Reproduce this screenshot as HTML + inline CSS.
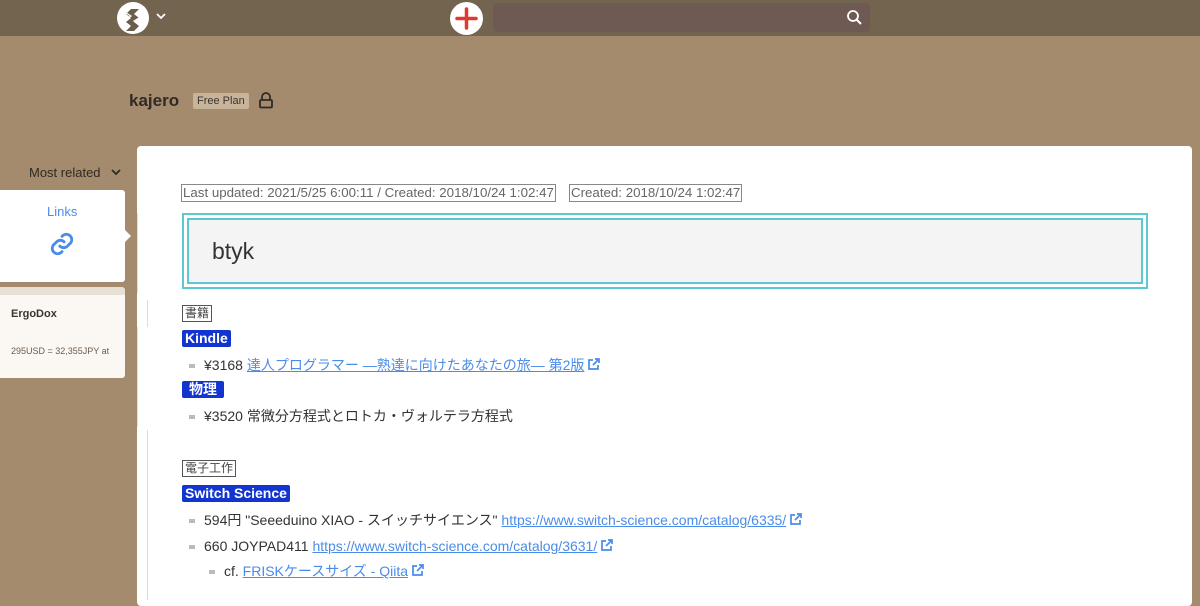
<!DOCTYPE html>
<html><head><meta charset="utf-8"><style>
*{margin:0;padding:0;box-sizing:border-box}
body{width:1200px;height:600px;overflow:hidden;background:#a58b6e;font-family:"Liberation Sans","Noto Sans CJK JP",sans-serif;position:relative;color:#333}
.abs{position:absolute}
.hdr{left:0;top:0;width:1200px;height:36px;background:#736450}
.search{left:493px;top:3px;width:377px;height:29px;background:#6f5953;border-radius:4px}
.card{left:137px;top:146px;width:1055px;height:460px;background:#fff;border-radius:4px}
.a{color:#4a8ce8;text-decoration:underline}
.li{font-size:14px;color:#333;white-space:nowrap;line-height:18px;height:18px}
.bul{display:inline-block;width:6px;height:4px;background:#bbb;margin-right:9px;vertical-align:middle}
.badge{background:#1235cf;color:#fff;font-weight:bold;font-size:14px;padding:0 3px;border-radius:2px;line-height:17px;height:17px}
.tag{border:1px solid #555;font-size:12px;color:#444;padding:0 2px;line-height:15px}
.ext{display:inline-block;vertical-align:-1px;margin-left:3px}
</style></head><body>
<div class="abs hdr"></div>
<svg class="abs" style="left:117px;top:2px" width="32" height="32" viewBox="0 0 32 32"><circle cx="16" cy="16" r="16" fill="#fff"/><path d="M9 7h13l-5 5 5 4-5 4 5 4-5 5H9l5-5-5-4 5-4-5-4 5-5z" fill="#6b5c4c"/><path d="M9 11l5 3-5 3M22 16l-5 3 5 3" stroke="#fff" stroke-width="1.2" fill="none"/></svg>
<svg class="abs" style="left:156px;top:12px" width="10" height="8"><path d="M1 2l4 4 4-4" stroke="#fff" stroke-width="1.8" fill="none"/></svg>
<svg class="abs" style="left:450px;top:2px" width="33" height="33"><circle cx="16.5" cy="16.5" r="16.5" fill="#fff"/><path d="M16.5 7v19M7 16.5h19" stroke="#e03a2c" stroke-width="3.5" stroke-linecap="round"/></svg>
<div class="abs search"></div>
<svg class="abs" style="left:846px;top:9px" width="17" height="17"><circle cx="7" cy="7" r="5" stroke="#fff" stroke-width="1.8" fill="none"/><path d="M10.5 10.5l4.5 4.5" stroke="#fff" stroke-width="2"/></svg>
<div class="abs" style="left:129px;top:91px;font-size:17px;font-weight:bold;color:#2f2a25">kajero</div>
<div class="abs" style="left:193px;top:93px;background:#c8b49a;color:#3a342e;font-size:11px;padding:2px 4px;border-radius:2px">Free Plan</div>
<svg class="abs" style="left:258px;top:92px" width="16" height="17"><path d="M4 8V5a4 4 0 018 0v3" stroke="#2f2a25" stroke-width="1.8" fill="none"/><rect x="2" y="8" width="12" height="7.5" rx="1" stroke="#2f2a25" stroke-width="1.8" fill="none"/></svg>
<div class="abs" style="left:29px;top:165px;font-size:13px;color:#2f2a25">Most related</div>
<svg class="abs" style="left:111px;top:168px" width="10" height="8"><path d="M1 2l4 4 4-4" stroke="#2f2a25" stroke-width="1.8" fill="none"/></svg>
<div class="abs" style="left:0;top:190px;width:125px;height:92px;background:#fff;border-radius:0 3px 3px 0"></div>
<div class="abs" style="left:47px;top:204px;font-size:13px;color:#4a8ce8">Links</div>
<svg class="abs" style="left:49px;top:231px" width="26" height="26" viewBox="0 0 24 24"><path d="M10 14a5 5 0 007 0l3-3a5 5 0 00-7-7l-1 1M14 10a5 5 0 00-7 0l-3 3a5 5 0 007 7l1-1" stroke="#4a8ce8" stroke-width="2.6" fill="none" stroke-linecap="round"/></svg>
<svg class="abs" style="left:125px;top:230px" width="6" height="12"><path d="M0 0l6 6-6 6z" fill="#fff"/></svg>
<div class="abs" style="left:0;top:287px;width:125px;height:91px;background:#fbf7f3;border-top:8px solid #e8dfd5;border-radius:0 3px 3px 0"></div>
<div class="abs" style="left:11px;top:308px;font-size:11px;font-weight:bold;color:#3a342e">ErgoDox</div>
<div class="abs" style="left:11px;top:346px;font-size:9px;color:#6b5c4c">295USD = 32,355JPY at</div>
<div class="abs card"></div>
<div class="abs" style="left:137px;top:213px;width:1px;height:80px;background:#ddd"></div>
<div class="abs" style="left:147px;top:300px;width:1px;height:27px;background:#ddd"></div>
<div class="abs" style="left:137px;top:327px;width:1px;height:100px;background:#ddd"></div>
<div class="abs" style="left:147px;top:430px;width:1px;height:170px;background:#ddd"></div>
<div class="abs" style="left:181px;top:184px;border:1px solid #888;font-size:13.3px;color:#666;padding:0 1px;line-height:16px">Last updated: 2021/5/25 6:00:11 / Created: 2018/10/24 1:02:47</div>
<div class="abs" style="left:569px;top:184px;border:1px solid #888;font-size:13.3px;color:#666;padding:0 1px;line-height:16px">Created: 2018/10/24 1:02:47</div>
<div class="abs" style="left:182px;top:213px;width:966px;height:76px;border:2px solid #5ec7d4;padding:3px"><div style="width:100%;height:100%;border:2px solid #5ec7d4;background:#f4f4f4;font-size:23px;color:#333;padding:18px 0 0 23px">btyk</div></div>
<div class="abs tag" style="left:182px;top:305px">書籍</div>
<div class="abs badge" style="left:182px;top:330px">Kindle</div>
<div class="abs li" style="left:189px;top:356px"><span class="bul"></span>¥3168 <span class="a">達人プログラマー ―熟達に向けたあなたの旅― 第2版</span><svg class="ext" width="13" height="13"><path d="M6 2H2v9h9V7M8 1h4v4M12 1L6 7" stroke="#4a8ce8" stroke-width="1.7" fill="none"/></svg></div>
<div class="abs badge" style="left:182px;top:381px;padding:0 7px">物理</div>
<div class="abs li" style="left:189px;top:407px"><span class="bul"></span>¥3520 常微分方程式とロトカ・ヴォルテラ方程式</div>
<div class="abs tag" style="left:182px;top:460px">電子工作</div>
<div class="abs badge" style="left:182px;top:485px">Switch Science</div>
<div class="abs li" style="left:189px;top:511px"><span class="bul"></span>594円 "Seeeduino XIAO - スイッチサイエンス" <span class="a">https://www.switch-science.com/catalog/6335/</span><svg class="ext" width="13" height="13"><path d="M6 2H2v9h9V7M8 1h4v4M12 1L6 7" stroke="#4a8ce8" stroke-width="1.7" fill="none"/></svg></div>
<div class="abs li" style="left:189px;top:537px"><span class="bul"></span>660 JOYPAD411 <span class="a">https://www.switch-science.com/catalog/3631/</span><svg class="ext" width="13" height="13"><path d="M6 2H2v9h9V7M8 1h4v4M12 1L6 7" stroke="#4a8ce8" stroke-width="1.7" fill="none"/></svg></div>
<div class="abs li" style="left:209px;top:562px"><span class="bul"></span>cf. <span class="a">FRISKケースサイズ - Qiita</span><svg class="ext" width="13" height="13"><path d="M6 2H2v9h9V7M8 1h4v4M12 1L6 7" stroke="#4a8ce8" stroke-width="1.7" fill="none"/></svg></div>
</body></html>
